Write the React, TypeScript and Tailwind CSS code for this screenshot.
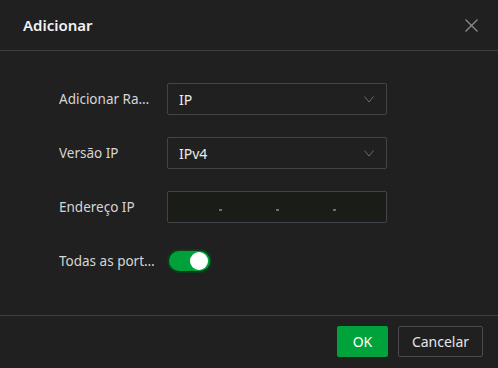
import React, { useState } from 'react';

const Chevron = () => (
  <svg width="10" height="7" viewBox="0 0 10 7" fill="none" className="shrink-0">
    <path d="M0.5 0.5L5 6L9.5 0.5" stroke="#6b6b6b" strokeWidth="1" />
  </svg>
);

function Row({ label, children }: { label: string; children: React.ReactNode }) {
  return (
    <div className="flex items-center h-[32px]">
      <span className="w-[108px] pr-[11px] truncate text-[13.5px] text-[#d6d6d6]">{label}</span>
      {children}
    </div>
  );
}

function FakeSelect({ value }: { value: string }) {
  return (
    <div className="w-[220px] h-[32px] border border-[#43434a] rounded-[2px] flex items-center justify-between pl-[11px] pr-[12px]">
      <span className="text-[14px] text-[#ececec]">{value}</span>
      <Chevron />
    </div>
  );
}

export default function App() {
  const [allPorts, setAllPorts] = useState(true);

  return (
    <div
      className="w-[498px] h-[368px] bg-[#202020] flex flex-col text-[#e6e6e6]"
      style={{ fontFamily: '"Noto Sans", "Open Sans", sans-serif' }}
    >
      {/* Header */}
      <div className="h-[51px] shrink-0 border-b border-[#3d3d44] flex items-center justify-between pl-[23px] pr-[20px]">
        <h2 className="text-[15px] font-semibold text-[#f2f2f2]">Adicionar</h2>
        <svg width="13" height="13" viewBox="0 0 13 13" fill="none">
          <path d="M0.5 0.5L12.5 12.5M12.5 0.5L0.5 12.5" stroke="#8c8c8c" strokeWidth="1.3" />
        </svg>
      </div>

      {/* Body */}
      <div className="flex-1 pt-[32px] pl-[59px] flex flex-col gap-[22px]">
        <Row label="Adicionar Range">
          <FakeSelect value="IP" />
        </Row>
        <Row label="Versão IP">
          <FakeSelect value="IPv4" />
        </Row>
        <Row label="Endereço IP">
          <div className="w-[220px] h-[32px] border border-[#43434a] rounded-[2px] bg-[#1a1c17] flex items-center pl-[51px] pt-[6px] gap-[54px]">
            <span className="w-[3px] h-[2px] bg-[#6e6e6e]" />
            <span className="w-[3px] h-[2px] bg-[#6e6e6e]" />
            <span className="w-[3px] h-[2px] bg-[#6e6e6e]" />
          </div>
        </Row>
        <Row label="Todas as portas">
          <button
            onClick={() => setAllPorts(!allPorts)}
            className={`w-[45px] h-[24px] rounded-full p-[2px] flex items-center border-[2px] border-[#0c3a1b] ${
              allPorts ? 'bg-[#00a13b] justify-end' : 'bg-[#555] justify-start'
            }`}
          >
            <span className="w-[18px] h-[18px] rounded-full bg-white block" />
          </button>
        </Row>
      </div>

      {/* Footer */}
      <div className="h-[53px] shrink-0 border-t border-[#3d3d44] flex justify-end items-start pt-[10px] pr-[15px] gap-[10px]">
        <button className="w-[51px] h-[31px] bg-[#00a33b] rounded-[2px] text-[14px] text-white">OK</button>
        <button className="w-[85px] h-[31px] border border-[#4a4a50] rounded-[2px] text-[14px] text-[#e6e6e6]">
          Cancelar
        </button>
      </div>
    </div>
  );
}
